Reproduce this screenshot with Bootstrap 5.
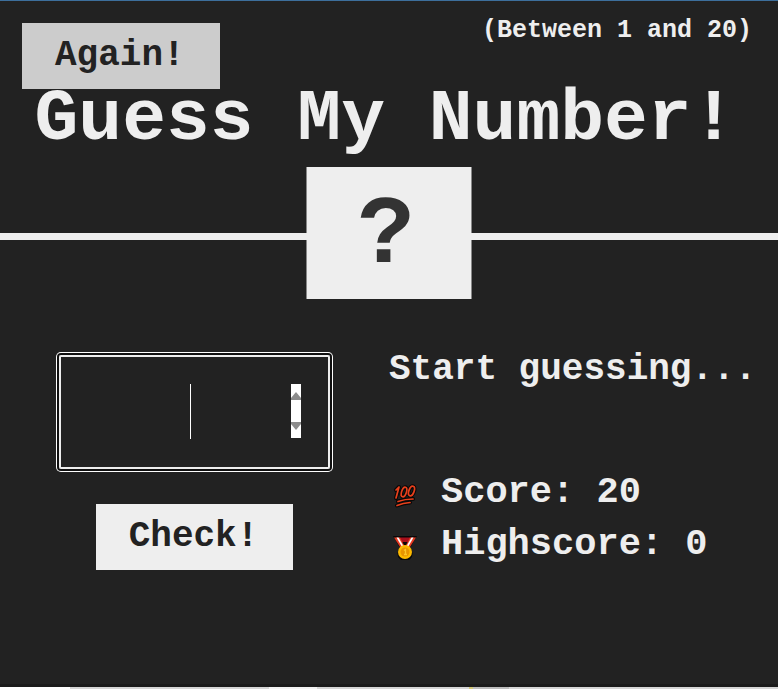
<!DOCTYPE html>
<html lang="en">
<head>
<meta charset="utf-8">
<meta name="viewport" content="width=device-width, initial-scale=1">
<title>Guess My Number!</title>
<link href="https://cdn.jsdelivr.net/npm/bootstrap@5.3.0/dist/css/bootstrap.min.css" rel="stylesheet">
<style>
  body { background: #222; color: #eee; font-family: "Liberation Mono", "Courier New", monospace; font-weight: 700; }
  .game-header { border-top: 1px solid #3d6f9c; border-bottom: 7px solid #eee; padding-bottom: 82px; }
  .top-bar { padding: 22px 26px 0 22px; }
  .range-note { font-size: 25px; line-height: 28px; margin-top: -6px; }
  .game-title { font-size: 73px; line-height: 62px; font-weight: 700; white-space: nowrap; padding-right: 8px; }
  .game-btn { background: #eee; color: #222; font-size: 36px; line-height: 42px; font-weight: 700; border: 0; border-radius: 0; padding: 12px 35px 12px 33px; }
  .game-btn:hover, .again-btn { background: #ccc; color: #222; }
  .secret { background: #eee; color: #333; font-size: 96px; line-height: 132px; width: 165px; height: 132px; }
  .secret span { display: block; padding-top: 4px; padding-right: 6px; }
  .game-main { padding-top: 115px; }
  .guess-wrap { width: 271px; }
  .guess-field { height: 114px; background: transparent; color: #eee; border: 2px solid #eee; outline: 0; box-shadow: 0 0 0 2px #101010, 0 0 0 3px #fff; font-size: 56px; text-align: center; border-radius: 2px; appearance: textfield; -moz-appearance: textfield; }
  .guess-field:focus { background: transparent; color: #eee; border-color: #eee; box-shadow: 0 0 0 2px #101010, 0 0 0 3px #fff; }
  .guess-field::-webkit-inner-spin-button { display: none; }
  .caret-line { left: 131px; top: 29px; width: 1px; height: 55px; background: #fff; }
  .spinner-pair { right: 29px; top: 29px; width: 10px; height: 54px; background: #fff; padding: 8px 0; }
  .spinner-pair button { display: block; width: 10px; height: 8px; padding: 0; border: 0; background: #8c8c8c; }
  .step-up { clip-path: polygon(50% 0, 100% 75%, 100% 100%, 0 100%, 0 75%); }
  .step-down { clip-path: polygon(0 0, 100% 0, 100% 25%, 50% 100%, 0 25%); }
  .check-btn { margin-top: 35px; }
  .readout { font-size: 37px; line-height: 52px; white-space: nowrap; }
  .status { font-size: 36px; margin-top: -11px; margin-bottom: 70px; }
  .readout svg { width: 24px; height: 24px; margin: 8px 24px 0 4px; }
  .page-foot { height: 5px; border-top: 3px solid #1b1b1b;
    background: linear-gradient(90deg, #fff 9%, #d6d6d6 9% 34.6%, #f3f3f3 34.6% 40.8%, #d6d6d6 40.8% 60.3%, #d3c879 60.3% 60.8%, #bdbdbd 60.8% 65.4%, #d6d6d6 65.4%); }
</style>
<script src="https://cdn.jsdelivr.net/npm/bootstrap@5.3.0/dist/js/bootstrap.bundle.min.js"></script>
</head>
<body class="min-vh-100 d-flex flex-column overflow-hidden">
<header class="game-header position-relative">
  <div class="top-bar d-flex justify-content-between align-items-start">
    <button type="button" class="btn game-btn again-btn">Again!</button>
    <p class="range-note mb-0">(Between 1 and 20)</p>
  </div>
  <h1 class="game-title text-center mb-0">Guess My Number!</h1>
  <div class="secret text-center position-absolute top-100 start-50 translate-middle"><span>?</span></div>
</header>
<main class="game-main flex-grow-1">
  <div class="row g-0">
    <section class="col-6 d-flex flex-column align-items-center">
      <div class="guess-wrap position-relative">
        <input type="number" class="form-control guess-field" aria-label="Your guess">
        <span class="caret-line position-absolute"></span>
        <div class="spinner-pair position-absolute d-flex flex-column justify-content-between">
          <button type="button" class="step-up" aria-label="Increase"></button>
          <button type="button" class="step-down" aria-label="Decrease"></button>
        </div>
      </div>
      <button type="button" class="btn game-btn check-btn">Check!</button>
    </section>
    <section class="col-6">
      <p class="readout status">Start guessing...</p>
      <p class="readout d-flex align-items-center mb-0">
        <svg viewBox="0 0 24 24" fill="none" stroke-linecap="round" stroke-linejoin="round" aria-hidden="true">
          <g stroke="#080808" stroke-width="4">
            <path d="M3 6 6 3 3 14"/>
            <ellipse cx="11" cy="8" rx="2.4" ry="5" transform="rotate(18 11 8)"/>
            <ellipse cx="18.5" cy="7" rx="2.6" ry="5" transform="rotate(20 18.5 7)"/>
            <path d="M5 17.5Q12 15 20 15M4 21.5Q10 19 17 18.5"/>
          </g>
          <g stroke="#e8401c" stroke-width="1.7">
            <path d="M3 6 6 3 3 14"/>
            <ellipse cx="11" cy="8" rx="2.4" ry="5" transform="rotate(18 11 8)"/>
            <ellipse cx="18.5" cy="7" rx="2.6" ry="5" transform="rotate(20 18.5 7)"/>
            <path d="M5 17.5Q12 15 20 15M4 21.5Q10 19 17 18.5"/>
          </g>
        </svg>
        <span>Score: <span>20</span></span>
      </p>
      <p class="readout d-flex align-items-center mb-0">
        <svg viewBox="0 0 24 24" aria-hidden="true">
          <path d="M0 0H24L17 12A7.500 7.500 0 1 1 7 12Z" fill="#080808"/>
          <path d="M6 1.500H18L15 6H9Z" fill="#a80f1c"/>
          <path d="M1 1.500H7L12 11H7Z" fill="#e63a22"/>
          <path d="M23 1.500H17L12 11H17Z" fill="#e63a22"/>
          <path d="M3.500 1.500H5.500L11 11H9Z" fill="#fff"/>
          <path d="M20.500 1.500H18.500L13 11H15Z" fill="#fff"/>
          <circle cx="12" cy="16" r="7" fill="#fdb900"/>
          <circle cx="12" cy="16" r="4.500" fill="#e89500"/>
          <path d="M11 14.500 12.500 13.500V18.500M11 18.500H14" fill="none" stroke="#fdc527" stroke-width="1.300"/>
        </svg>
        <span>Highscore: <span>0</span></span>
      </p>
    </section>
  </div>
</main>
<footer class="page-foot"></footer>
</body>
</html>
